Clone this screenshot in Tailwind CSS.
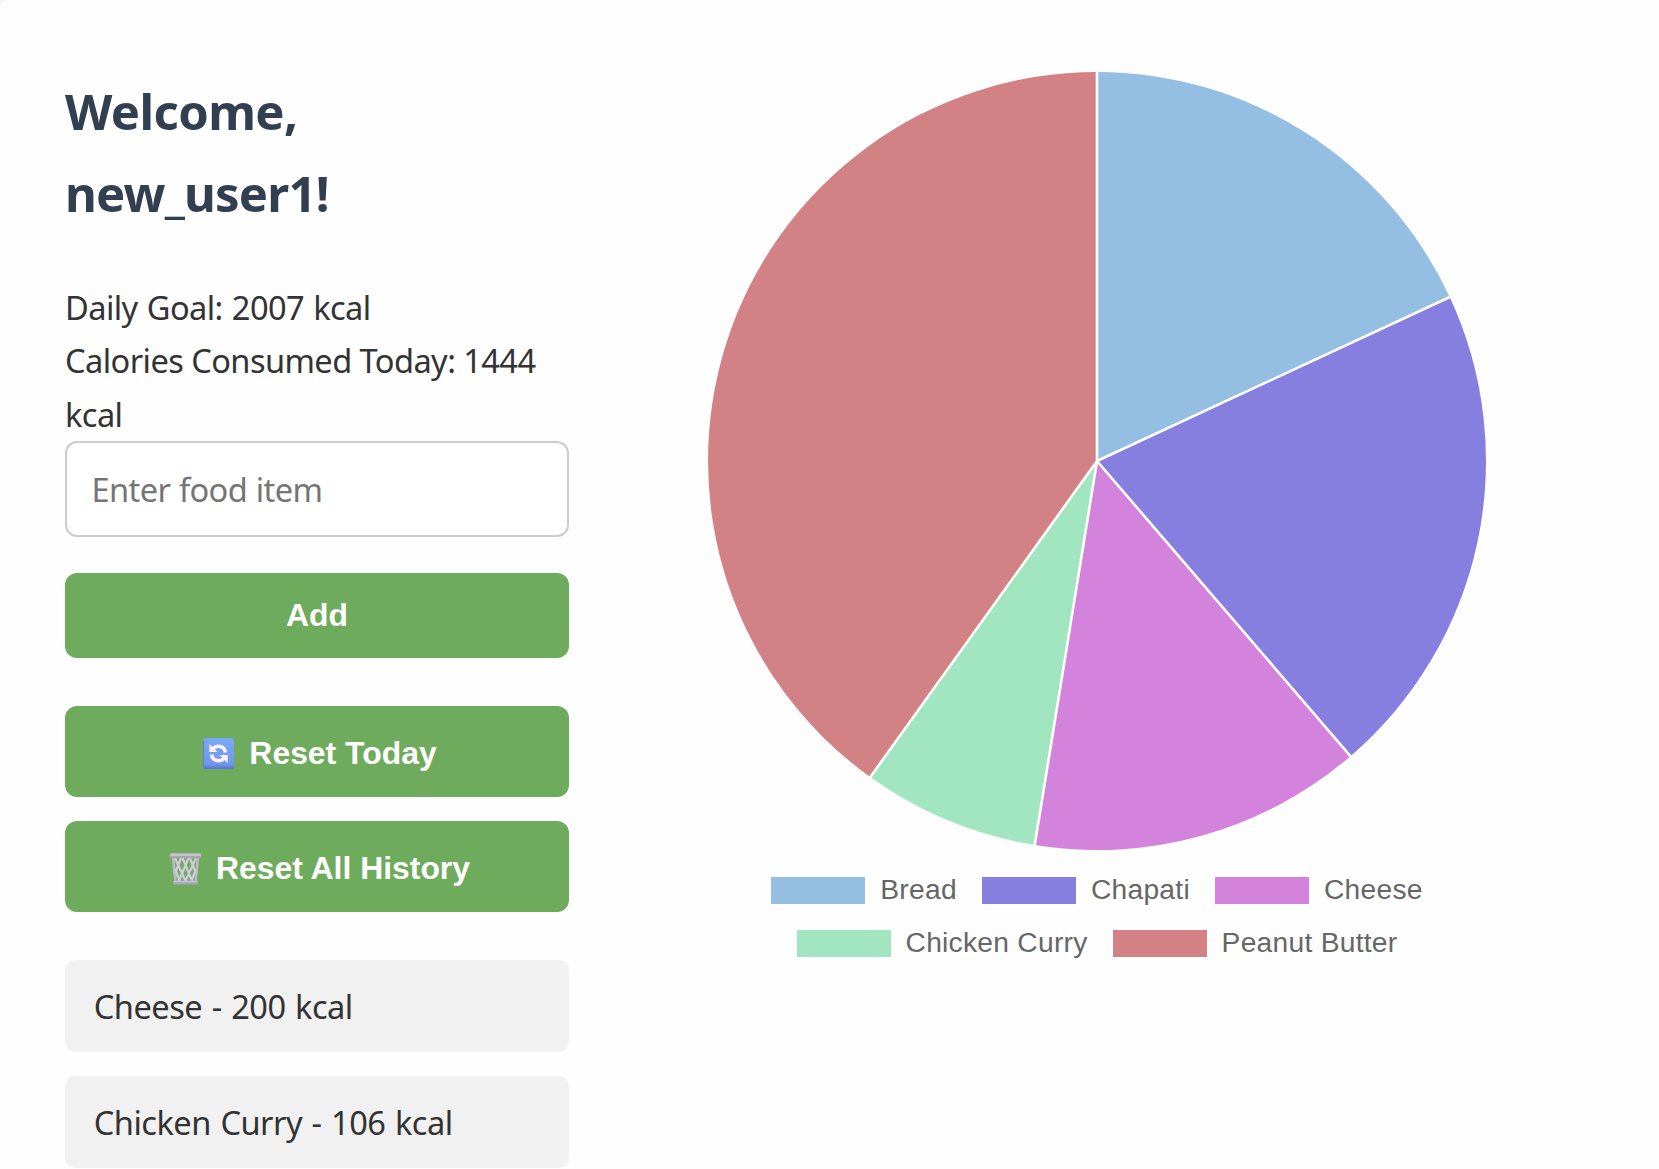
<!DOCTYPE html>
<html lang="en">
<head>
<meta charset="utf-8">
<title>Calorie Tracker</title>
<script src="https://cdn.jsdelivr.net/npm/@tailwindcss/browser@4"></script>
</head>
<body class="bg-[#f4f7f6] font-['Noto_Sans',sans-serif] text-[#333]">
<main class="flex h-[1169px] w-[1659px] overflow-hidden rounded-tl-[11px] bg-[#fefefe] pl-[65px]">
  <section class="w-[504px] shrink-0 pt-[71px]">
    <h1 class="mb-[46px] text-[49px] leading-[81.5px] font-bold whitespace-nowrap text-[#323f50]"><span class="tracking-[-0.6px]">Welcome,</span><br><span class="tracking-[-0.8px]">new_user1!</span></h1>
    <p class="h-[161px] pt-px text-[32.6px] leading-[53.3px] tracking-[-0.57px] whitespace-nowrap"><span class="[word-spacing:1.2px]">Daily Goal: 2007 kcal</span><br>Calories Consumed Today: 1444<br>kcal</p>
    <div class="flex h-24 items-center rounded-xl border-2 border-[#ccc] bg-white pt-[3px] pl-[24.5px] text-[32.6px] tracking-[-0.6px] text-[#757575] [word-spacing:0.7px]">Enter food item</div>
    <button class="mt-9 flex h-[85px] w-full items-center justify-center rounded-xl bg-[#6eab5c] font-['Liberation_Sans',sans-serif] text-[31.9px] font-bold text-white">Add</button>
    <button class="mt-12 flex h-[91px] w-full items-center justify-center gap-[9px] rounded-xl bg-[#6eab5c] font-['Liberation_Sans',sans-serif] text-[31.9px] font-bold text-white">
      <svg class="h-[31px] w-[43px] translate-y-[2px]" viewBox="0 0 43 31" fill="none">
        <defs><linearGradient id="tile" x1="0" y1="0" x2="0" y2="1"><stop offset="0" stop-color="#7aaaf6"/><stop offset=".85" stop-color="#6f97e8"/><stop offset="1" stop-color="#5672cf"/></linearGradient></defs>
        <rect x="6" width="31" height="31" rx="2.5" fill="url(#tile)"/>
        <path d="M6.6 2.5v26" stroke="#5b83dc" stroke-width="1.2"/>
        <g id="arrow"><path d="M12.3 6v8h8z" fill="#fdf0fb"/><path d="M15.5 11.2c4-4.8 12-3.6 13 3.3" stroke="#fdf0fb" stroke-width="3.6"/></g>
        <use href="#arrow" transform="rotate(180 21.5 15.5)"/>
      </svg>
      <span class="pt-[5px]">Reset Today</span>
    </button>
    <button class="mt-6 flex h-[91px] w-full items-center justify-center gap-[9px] rounded-xl bg-[#6eab5c] font-['Liberation_Sans',sans-serif] text-[31.9px] font-bold text-white">
      <svg class="h-[32px] w-[43px] translate-y-[2px]" viewBox="0 0 43 32" fill="none">
        <path d="M9 4l2.5 25M34 4l-2.5 25" stroke="#bdb7c9" stroke-width="2.6"/>
        <path d="M11 5l11 24M18.500 5l10 24M26 5l5 13M11 16l5 13M32 5l-11 24M24.500 5l-10 24M17 5l-5 13M32 16l-5 13" stroke="#d0cbdb" stroke-width="2.300"/>
        <rect x="9" y="27.8" width="25" height="3.7" rx="1.6" fill="#aaa4b7"/>
        <rect x="9.5" y="27.8" width="24" height="1.5" rx=".7" fill="#c7c1d1"/>
        <rect x="5.5" y=".5" width="32" height="4.8" rx="1.8" fill="#a9a4b3"/>
        <rect x="6" y=".5" width="31" height="2.6" rx="1.3" fill="#c9c5cf"/>
      </svg>
      <span class="pt-[5px]">Reset All History</span>
    </button>
    <ul class="mt-12 flex flex-col gap-6 text-[32.6px] tracking-[-0.52px] [word-spacing:1.6px]">
      <li class="flex h-[92px] items-center rounded-[10px] bg-[#f1f1f1] pt-[2px] pl-[28.8px]">Cheese - 200 kcal</li>
      <li class="flex h-[92px] items-center rounded-[10px] bg-[#f1f1f1] pt-[2px] pl-[28.8px]">Chicken Curry - 106 kcal</li>
    </ul>
  </section>
  <section class="ml-[139px] w-[778px] pt-[72px]">
    <svg class="block size-[778px]" viewBox="0 0 778 778">
      <path d="M389 389V0A389 389 0 0 1 741.7 225z" fill="#94bfe3"/>
      <path d="M389 389L741.7 225A389 389 0 0 1 642.4 684.2z" fill="#867fe0"/>
      <path d="M389 389L642.4 684.2A389 389 0 0 1 326.7 773z" fill="#d483dc"/>
      <path d="M389 389L326.7 773A389 389 0 0 1 162.3 705.1z" fill="#a1e6c0"/>
      <path d="M389 389L162.3 705.1A389 389 0 0 1 389 0z" fill="#d28284"/>
      <path d="M389 389V-2M389 389L743.5 224.2M389 389L643.7 685.7M389 389L326.4 775M389 389L161.1 706.7" stroke="#fff" stroke-width="2.6"/>
    </svg>
    <div class="mt-[27px] flex flex-col gap-[26px] font-['Liberation_Sans',sans-serif] text-[28.2px] leading-[27px] tracking-[0.27px] whitespace-nowrap text-[#666]">
      <div class="flex justify-center gap-[25px]">
        <div class="flex gap-[15px]"><i class="h-[27px] w-[94px] bg-[#94bfe3]"></i><span class="-mt-px">Bread</span></div>
        <div class="flex gap-[15px]"><i class="h-[27px] w-[94px] bg-[#867fe0]"></i><span class="-mt-px">Chapati</span></div>
        <div class="flex gap-[15px]"><i class="h-[27px] w-[94px] bg-[#d483dc]"></i><span class="-mt-px">Cheese</span></div>
      </div>
      <div class="flex justify-center gap-[25px]">
        <div class="flex gap-[15px]"><i class="h-[27px] w-[94px] bg-[#a1e6c0]"></i><span class="-mt-px">Chicken Curry</span></div>
        <div class="flex gap-[15px]"><i class="h-[27px] w-[94px] bg-[#d28284]"></i><span class="-mt-px">Peanut Butter</span></div>
      </div>
    </div>
  </section>
</main>
</body>
</html>
